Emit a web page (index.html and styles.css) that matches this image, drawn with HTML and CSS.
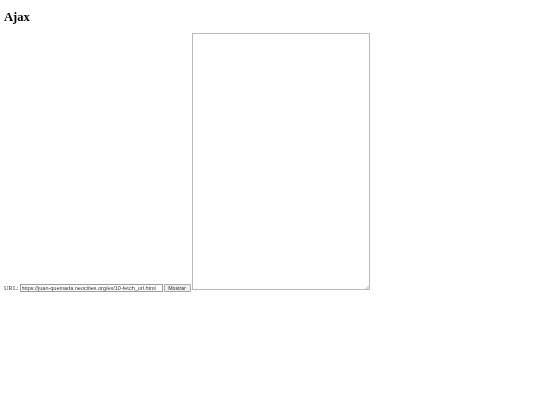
FILE: index.html
```html
<!DOCTYPE html>
<html lang="es">
<head>
<meta charset="utf-8">
<title>Ajax</title>
<link rel="stylesheet" href="styles.css">
</head>
<body>
<h1 class="title">Ajax</h1>
<div class="row">
  <span class="label">URL:</span>
  <input class="url" type="text" value="https://juan-quemada.neocities.org/ex/10-fetch_url.html">
  <button class="btn" type="button">Mostrar</button>
  <span class="area-wrap">
    <textarea class="area"></textarea>
    <svg class="grip" width="4" height="4" viewBox="0 0 4 4"><path d="M4 0.5 L0.5 4 M4 2.2 L2.2 4" stroke="#9a9a9a" stroke-width="0.6" fill="none"/></svg>
  </span>
</div>
</body>
</html>
```
FILE: styles.css
```css
html, body {
  background: #fff;
}
body {
  margin: 3px 4px;
  font-family: "Liberation Serif", "Times New Roman", serif;
  font-size: 6px;
  color: #000;
}
.title {
  font-size: 12.6px;
  font-weight: bold;
  margin: 8px 0 0 0;
  line-height: 13.8px;
  will-change: transform;
}
.row {
  display: flex;
  align-items: flex-end;
  gap: 1px;
  margin-top: 8px;
  will-change: transform;
}
.label {
  font-size: 6.4px;
  line-height: 7px;
  margin: 0 0 1px 0;
  color: #444;
}
.url {
  box-sizing: border-box;
  width: 143px;
  height: 8px;
  margin: 0;
  padding: 0 1px;
  border: 1px solid #9d9d9d;
  border-radius: 0;
  font-family: "Liberation Sans", Arial, sans-serif;
  font-size: 5.5px;
  line-height: 6px;
  color: #333;
  background: #fff;
}
.btn {
  box-sizing: border-box;
  width: 27px;
  height: 8px;
  margin: 0;
  padding: 0;
  border: 1px solid #a8a8a8;
  border-radius: 1px;
  background: #efefef;
  font-family: "Liberation Sans", Arial, sans-serif;
  font-size: 5.2px;
  line-height: 6px;
  color: #333;
}
.area-wrap {
  position: relative;
  display: block;
  width: 178px;
  height: 257px;
  margin-bottom: 2px;
}
.area {
  display: block;
  box-sizing: border-box;
  width: 178px;
  height: 257px;
  margin: 0;
  padding: 0;
  border: 1px solid #b9b9b9;
  resize: none;
  background: #fff;
}
.grip {
  position: absolute;
  right: 1px;
  bottom: 1px;
}
```
